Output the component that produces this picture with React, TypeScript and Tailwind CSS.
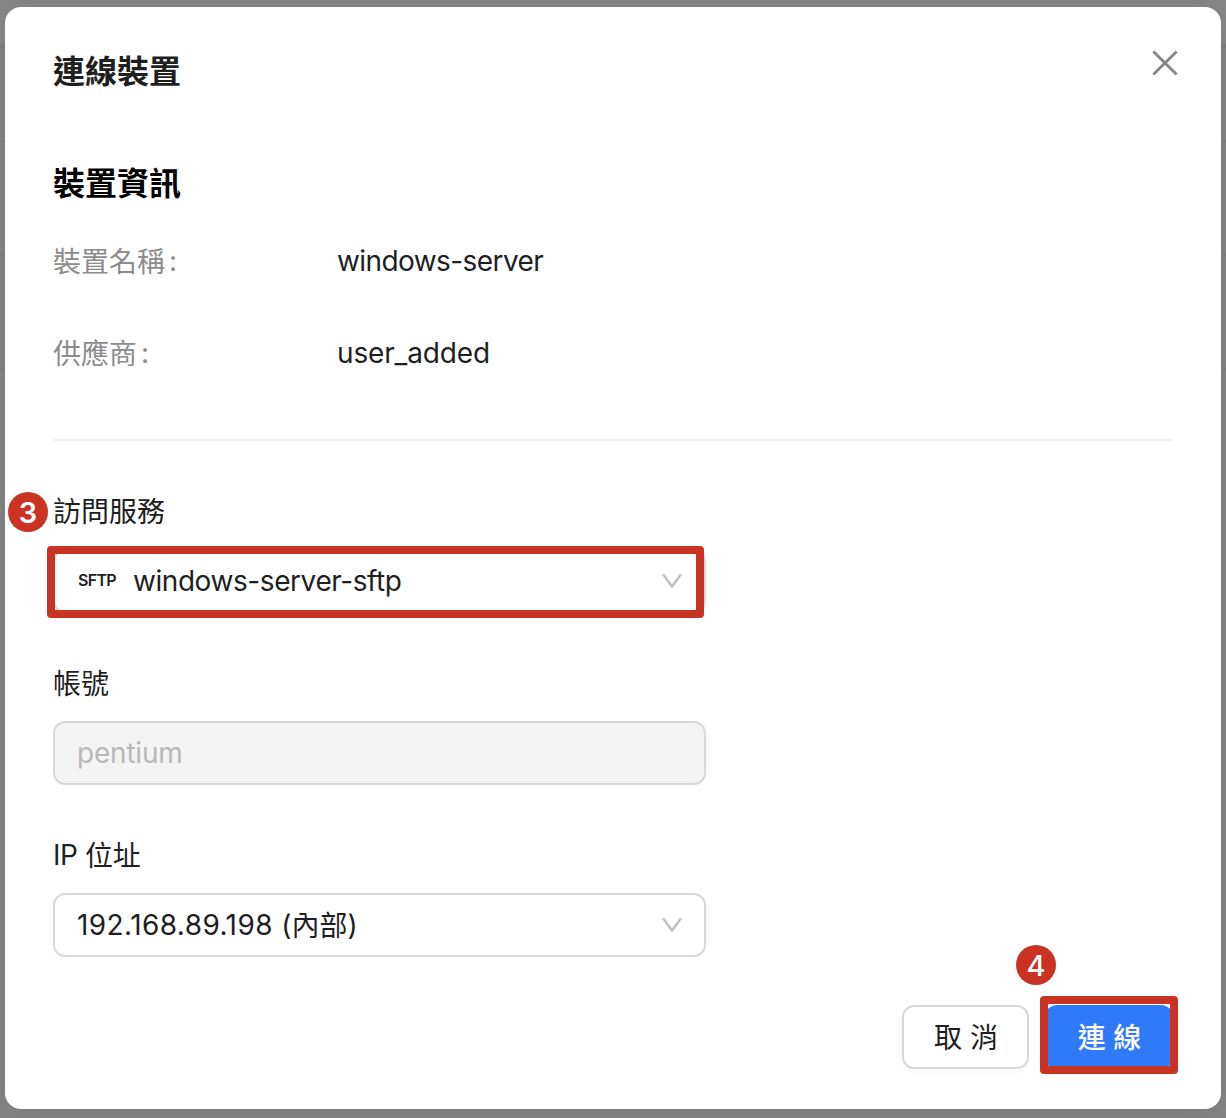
import type { ReactNode } from "react";

const infoRows = [
  { label: "裝置名稱", value: "windows-server", tracking: "tracking-[-0.58px]" },
  { label: "供應商", value: "user_added", tracking: "tracking-[-0.15px]" },
];

function CloseIcon() {
  return (
    <svg width="26" height="26" viewBox="0 0 26 26" fill="none" stroke="#868686" strokeWidth="2.8">
      <path d="M1.4 1.4 L24.6 24.6 M24.6 1.4 L1.4 24.6" />
    </svg>
  );
}

function DownIcon() {
  return (
    <svg width="22" height="15" viewBox="0 0 22 15" fill="#bfbfbf">
      <path d="M0.6 0.2 H3.6 L11 10.6 L18.4 0.2 H21.4 L11.9 13.6 Q11 14.8 10.1 13.6 Z" />
    </svg>
  );
}

function Marker({ children, className }: { children: ReactNode; className: string }) {
  return (
    <span
      className={`absolute flex h-10 w-10 items-center justify-center rounded-full bg-[#c93323] text-[29px] leading-none text-white ${className}`}
    >
      {children}
    </span>
  );
}

function Field({ label, children }: { label: ReactNode; children: ReactNode }) {
  return (
    <div className="relative flex w-[653px] flex-col">
      <label className="mb-4 h-11 leading-[44px]">{label}</label>
      {children}
    </div>
  );
}

// Chinese glyphs sit slightly lower than the Latin ones beside them
function Zh({ children }: { children: ReactNode }) {
  return <span className="inline-block translate-y-px">{children}</span>;
}

export default function App() {
  return (
    <div className="relative h-[1118px] w-[1226px] overflow-hidden bg-[#838383] font-['Inter','Noto_Sans_CJK_TC',sans-serif] text-[28px] text-[#1f1f1f]">
      {/* Dimmed page behind the dialog */}
      <div className="absolute inset-0 flex flex-col">
        <div className="h-12 border-b-4 border-[#7d7d7d] bg-[#878787]" />
        <div className="h-[94px] border-b-2 border-[#7c7c7c]" />
        <div className="h-[114px] border-b-2 border-[#7c7c7c]" />
        <div className="h-[114px] border-b-2 border-[#7c7c7c]" />
      </div>

      <div className="relative mt-[7px] ml-[5px] flex h-[1102px] w-[1216px] flex-col rounded-2xl bg-white px-12 pt-10 shadow-[0_0_24px_rgba(0,0,0,0.06)]">
        <div className="flex h-[50px] items-center justify-between">
          <h1 className="text-[32px] font-bold leading-[50px]">連線裝置</h1>
          <button className="-mt-[18px] -mr-[5px]" aria-label="Close">
            <CloseIcon />
          </button>
        </div>

        <h2 className="mt-[62px] text-[32px] font-bold leading-[50px] text-black">裝置資訊</h2>
        <dl className="mt-[30px] flex flex-col gap-12">
          {infoRows.map((row) => (
            <div key={row.label} className="flex h-11 leading-[44px]">
              <dt className="w-[284px] text-[#8c8c8c]">
                <Zh>{row.label}</Zh>
                <span className="ml-1">:</span>
              </dt>
              <dd className={row.tracking}>{row.value}</dd>
            </div>
          ))}
        </dl>

        <hr className="mt-16 border-t-2 border-[#f0f0f0]" />

        <div className="mt-12 flex flex-col gap-12">
          <Field label={<Zh>訪問服務</Zh>}>
            <Marker className="top-[3px] -left-[45px] font-semibold">3</Marker>
            <div className="flex h-16 items-center rounded-xl border-2 border-[#d9d9d9] pr-[21px] pl-[23px]">
              <span className="mr-[17px] pb-0.5 text-[16px] font-semibold tracking-[-0.7px]">SFTP</span>
              <span className="flex-1 tracking-[-0.42px]">windows-server-sftp</span>
              <DownIcon />
            </div>
            <div className="absolute top-[57px] -left-[6px] h-[72px] w-[657px] rounded-[4px] border-8 border-[#c93323]" />
          </Field>

          <Field label={<Zh>帳號</Zh>}>
            <div className="flex h-16 items-center rounded-xl border-2 border-[#d9d9d9] bg-[#f4f4f4] px-[22px] tracking-[-0.2px] text-[#b8b8b8]">
              pentium
            </div>
          </Field>

          <Field
            label={
              <span className="tracking-[-0.4px]">
                IP <Zh>位址</Zh>
              </span>
            }
          >
            <div className="flex h-16 items-center rounded-xl border-2 border-[#d9d9d9] pr-[21px] pl-[22px]">
              <span className="flex-1">
                <span className="tracking-[0.42px]">192.168.89.198 </span>(<Zh>內部</Zh>)
              </span>
              <DownIcon />
            </div>
          </Field>
        </div>

        <div className="mt-12 flex justify-end gap-4">
          <button className="flex h-16 w-[127px] items-center justify-center rounded-xl border-2 border-[#d9d9d9] bg-white pt-0.5 pl-px shadow-[0_4px_0_rgba(0,0,0,0.02)]">
            取 消
          </button>
          <div className="relative">
            <button className="flex h-16 w-32 items-center justify-center rounded-xl bg-[#3079f8] pt-0.5 pl-px font-medium text-white">
              連 線
            </button>
            <div className="absolute -top-[9px] -left-[5px] h-[78px] w-[138px] rounded-[4px] border-8 border-[#c93323]" />
            <Marker className="-top-[60px] -left-[29px] font-medium">4</Marker>
          </div>
        </div>
      </div>
    </div>
  );
}
